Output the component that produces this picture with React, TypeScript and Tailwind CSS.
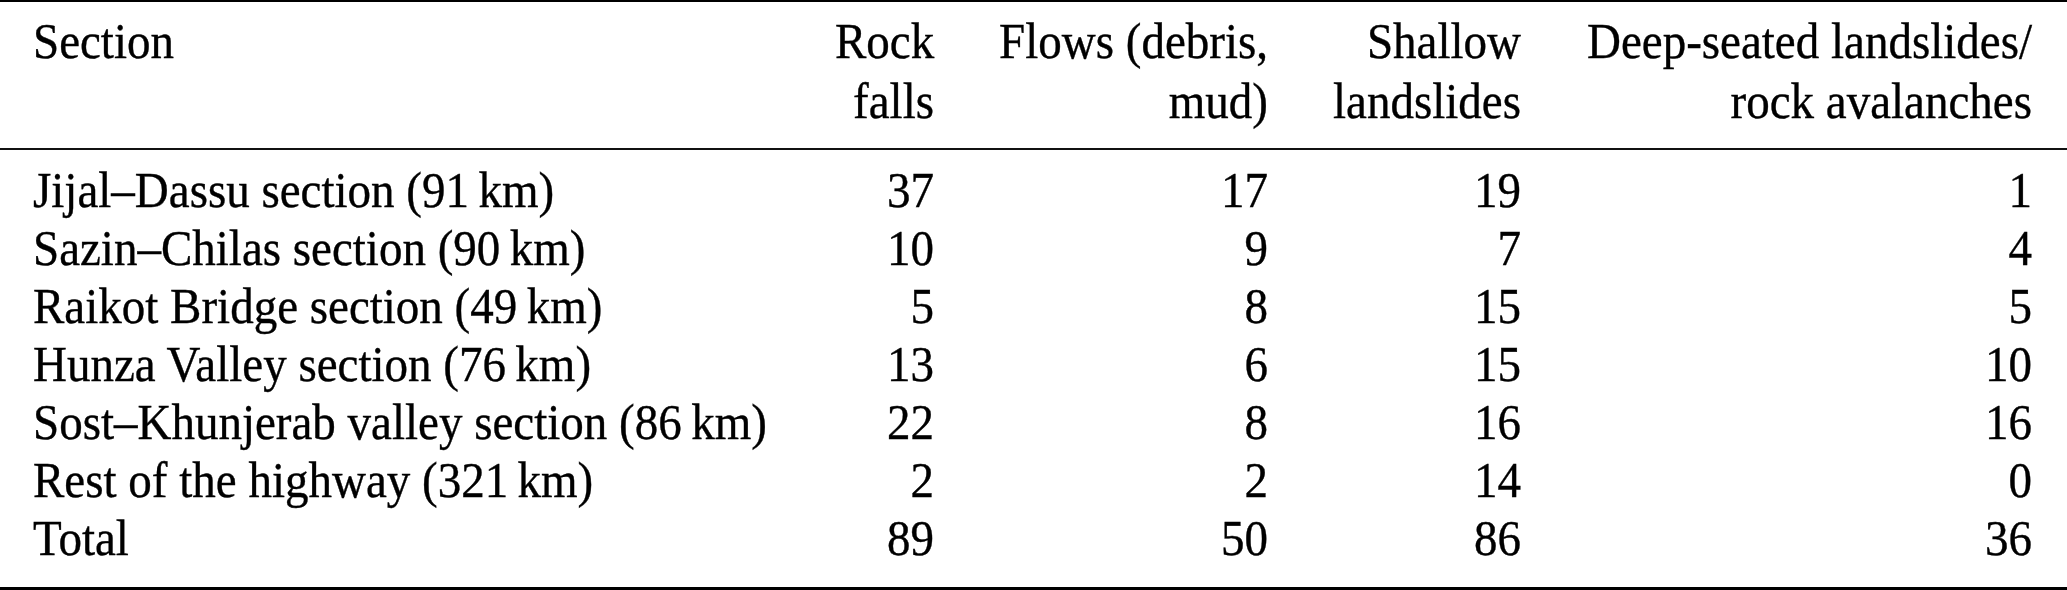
import React from "react";

const rows: string[][] = [
  ["Jijal–Dassu section (91\u2009km)", "37", "17", "19", "1"],
  ["Sazin–Chilas section (90\u2009km)", "10", "9", "7", "4"],
  ["Raikot Bridge section (49\u2009km)", "5", "8", "15", "5"],
  ["Hunza Valley section (76\u2009km)", "13", "6", "15", "10"],
  ["Sost–Khunjerab valley section (86\u2009km)", "22", "8", "16", "16"],
  ["Rest of the highway (321\u2009km)", "2", "2", "14", "0"],
  ["Total", "89", "50", "86", "36"],
];

const header: string[][] = [
  ["Section"],
  ["Rock", "falls"],
  ["Flows (debris,", "mud)"],
  ["Shallow", "landslides"],
  ["Deep-seated landslides/", "rock avalanches"],
];

// glyphs in the reference are a little taller than their width suggests
function Txt({ children }: { children: React.ReactNode }) {
  return <span className="inline-block whitespace-nowrap origin-[center_70%] scale-y-[1.09]">{children}</span>;
}

const cols = "grid grid-cols-[1fr_99px_269px_188px_446px] gap-x-[65px] pl-[33px] pr-[35px]";

export default function App() {
  return (
    <div className="w-[2067px] h-[590px] bg-white text-black [font-family:'Liberation_Serif','Times_New_Roman',serif] text-[47px] [-webkit-text-stroke:0.35px_black] border-t-[2px] border-b-[3px] border-black">
      <div className={`${cols} pt-[10px] pb-[16px] leading-[60px]`}>
        {header.map((lines, i) => (
          <div key={i} className={i === 0 ? "text-left" : "text-right"}>
            {lines.map((l) => (
              <div key={l}>
                <Txt>{l}</Txt>
              </div>
            ))}
          </div>
        ))}
      </div>
      <div className="h-[2px] bg-[#111]" />
      <div className={`${cols} pt-[12px] pb-[19px] leading-[58px]`}>
        {rows.map((r) =>
          r.map((cell, j) => (
            <div key={r[0] + j} className={j === 0 ? "text-left" : "text-right"}>
              <Txt>{cell}</Txt>
            </div>
          ))
        )}
      </div>
    </div>
  );
}
